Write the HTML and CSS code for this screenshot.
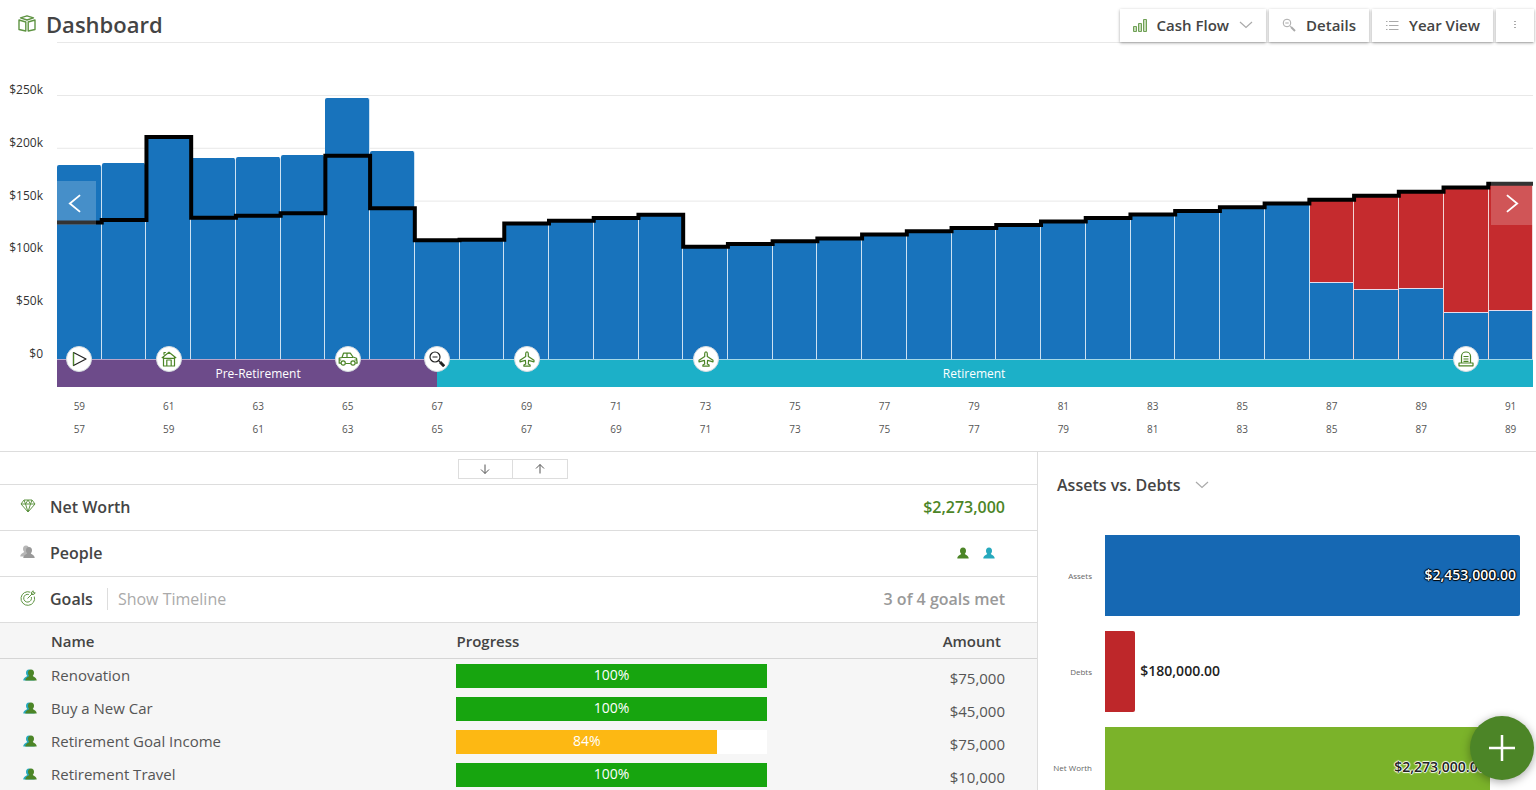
FILE: index.html
```html
<!DOCTYPE html>
<html lang="en">
<head>
<meta charset="utf-8">
<title>Dashboard</title>
<link rel="stylesheet" href="styles.css">
</head>
<body>
<svg class="defs" aria-hidden="true">
  <symbol id="person" viewBox="0 0 12 12"><path d="M6 .5c2 0 3 1.400 3 3.200 0 1.300-.5 2.300-1.200 3 0 1 3.700 1.200 3.900 4.800H.3C.5 7.900 4.200 7.700 4.200 6.700 3.500 6 3 5 3 3.700 3 1.900 4 .5 6 .5z"/></symbol>
  <symbol id="chevron" viewBox="0 0 14 8"><path d="M1 1l6 5.500L13 1" fill="none" stroke="currentColor" stroke-width="1.200"/></symbol>
  <symbol id="plane" viewBox="0 0 16 16"><path d="M8 .8c.9 0 1.300.9 1.300 2v2.700l5.700 3.700v1.600L9.600 9.300 9.300 13l1.800 1v1.200H4.900V14l1.800-1-.3-3.700L1 10.800V9.200l5.700-3.700V2.800c0-1.100.4-2 1.300-2z" fill="none" stroke="currentColor" stroke-width="1.200" stroke-linejoin="round"/></symbol>
</svg>

<div class="app">
  <header class="topbar">
    <div class="brand">
      <svg class="brand-icon" viewBox="0 0 18 17" fill="none" stroke="currentColor" stroke-width="1.400" stroke-linejoin="round"><path d="M9 .8l6.500 2L9 5 2.500 2.800zM1 5l6.800 2v9L1 14.500zM17 5l-6.800 2v9l6.800-1.500z"/></svg>
      <h1>Dashboard</h1>
    </div>
    <nav class="tools">
      <button class="tool" type="button">
        <svg class="icon-bars" viewBox="0 0 14 14" fill="#c5dbb8" stroke="currentColor"><path d="M.5 8.500h3v5h-3zM5.500 5.500h3v8h-3zM10.500 1.500h3v12h-3z"/></svg>
        <span>Cash Flow</span>
        <svg class="chev"><use href="#chevron"/></svg>
      </button>
      <button class="tool" type="button">
        <svg class="icon-gray" viewBox="0 0 14 14" fill="none" stroke="currentColor"><circle cx="5" cy="5" r="3.800"/><path d="M3.300 5h3.400M7.800 7.800l1 1"/><path d="M9 9l4 4" stroke-width="2"/></svg>
        <span>Details</span>
      </button>
      <button class="tool" type="button">
        <svg class="icon-gray" viewBox="0 0 14 14" stroke="currentColor"><path d="M1 3.500h1.500M4 3.500h9.500M1 7.500h1.500M4 7.500h9.500M1 11.500h1.500M4 11.500h9.500"/></svg>
        <span>Year View</span>
      </button>
      <button class="tool more" type="button" aria-label="More">
        <svg viewBox="0 0 4 10" fill="currentColor"><path d="M1 1h2v1H1zM1 4h2v1H1zM1 7h2v1H1z"/></svg>
      </button>
    </nav>
  </header>

  <section class="cashflow" aria-label="Cash Flow">
    <div class="y-axis"><span>$250k</span><span>$200k</span><span>$150k</span><span>$100k</span><span>$50k</span><span>$0</span></div>
    <div class="chart">
      <div class="plot">
        <i class="bar" style="--v:184"></i><i class="bar" style="--v:186"></i><i class="bar" style="--v:210"></i><i class="bar" style="--v:190"></i><i class="bar" style="--v:191.500"></i><i class="bar" style="--v:193.500"></i><i class="bar" style="--v:247.500"></i><i class="bar" style="--v:197"></i><i class="bar" style="--v:112.500"></i><i class="bar" style="--v:113"></i><i class="bar" style="--v:128.500"></i><i class="bar" style="--v:131"></i><i class="bar" style="--v:133.500"></i><i class="bar" style="--v:136.500"></i><i class="bar" style="--v:106.500"></i><i class="bar" style="--v:109"></i><i class="bar" style="--v:111.500"></i><i class="bar" style="--v:114"></i><i class="bar" style="--v:118"></i><i class="bar" style="--v:120.500"></i><i class="bar" style="--v:124"></i><i class="bar" style="--v:127"></i><i class="bar" style="--v:130"></i><i class="bar" style="--v:133.500"></i><i class="bar" style="--v:137"></i><i class="bar" style="--v:140"></i><i class="bar" style="--v:143.500"></i><i class="bar" style="--v:147.500"></i>
        <i class="bar short" style="--v:151;--b:72"></i><i class="bar short" style="--v:154.500;--b:65"></i><i class="bar short" style="--v:158.500;--b:66"></i><i class="bar short" style="--v:162.500;--b:44"></i><i class="bar short" style="--v:166;--b:45"></i>
        <svg class="need" viewBox="0 95 33 264" preserveAspectRatio="none" aria-hidden="true"><path d="M0 222.500H1V220H2V137H3V217.700H4V215.700H5V213.300H6V155.700H7V208.300H8V240.300H9V239.700H10V223.500H11V220.700H12V218H13V214.700H14V246.700H15V244H16V241.300H17V238.500H18V234.500H19V231.300H20V228H21V225H22V221.500H23V218H24V214.500H25V211H26V207.300H27V203.400H28V199.700H29V195.700H30V191.700H31V187.500H32V183.700H33"/></svg>
        <button class="pager prev" type="button" aria-label="Earlier years"><svg viewBox="0 0 14 20"><path d="M13 1L2 10l11 9"/></svg></button>
        <button class="pager next" type="button" aria-label="Later years"><svg viewBox="0 0 14 20"><path d="M1 1l11 9L1 19"/></svg></button>
      </div>
      <div class="stages">
        <div class="stage pre">Pre-Retirement</div>
        <div class="stage post">Retirement</div>
        <span class="marker dark" style="--i:0"><svg viewBox="0 0 16 16"><path d="M2.500 1.500L15 8 2.500 14.500z" stroke="#222"/><path d="M2.500 1.500v13" stroke="#4c8527"/></svg></span>
        <span class="marker" style="--i:2"><svg viewBox="0 0 16 16"><path d="M.8 7L8 1.200 15.200 7M2.500 6v9h11V6M3 3.800V1.500h1.800M5.800 15V9h4.400v6M2 7.300h12"/></svg></span>
        <span class="marker wide" style="--i:6"><svg viewBox="0 0 20 14"><path d="M3 11.200H1.200V6.200L4 5.500 5.500 1.200h6.800L15 5l3.500 1.200.7 5h-1.700M7.500 11.500h5.200M4 5.500h11M9 1.200v4.300M1.200 8h2M16.500 8h2.300"/><circle cx="5.200" cy="11" r="2.100"/><circle cx="15" cy="11" r="2.100"/></svg></span>
        <span class="marker dark" style="--i:8"><svg viewBox="0 0 16 16"><circle cx="6" cy="6" r="5"/><path d="M3.500 6h5M9.500 9.500l1.500 1.500"/><path d="M11 11l4.200 4.200" stroke-width="3"/></svg></span>
        <span class="marker" style="--i:10"><svg><use href="#plane"/></svg></span>
        <span class="marker" style="--i:14"><svg><use href="#plane"/></svg></span>
        <span class="marker" style="--i:31"><svg viewBox="0 0 16 16"><path d="M3.500 12V5A4.300 4.300 0 0 1 8 1a4.300 4.300 0 0 1 4.500 4v7M1 14.800V12h14v2.800zM5.500 5.500h5M5.500 8h5M5.500 10.300h5"/></svg></span>
      </div>
      <div class="ages"><span>59</span><span>61</span><span>63</span><span>65</span><span>67</span><span>69</span><span>71</span><span>73</span><span>75</span><span>77</span><span>79</span><span>81</span><span>83</span><span>85</span><span>87</span><span>89</span><span>91</span></div>
      <div class="ages"><span>57</span><span>59</span><span>61</span><span>63</span><span>65</span><span>67</span><span>69</span><span>71</span><span>73</span><span>75</span><span>77</span><span>79</span><span>81</span><span>83</span><span>85</span><span>87</span><span>89</span></div>
    </div>
  </section>

  <main class="lower">
    <div class="details">
      <div class="resize">
        <button type="button" aria-label="Move down"><svg viewBox="0 0 10 10"><path d="M5 .5v9M1 5.500l4 4 4-4"/></svg></button>
        <button type="button" aria-label="Move up"><svg viewBox="0 0 10 10"><path d="M5 9.500v-9M1 4.500l4-4 4 4"/></svg></button>
      </div>
      <section class="row">
        <svg class="row-icon" viewBox="0 0 16 16"><path d="M4 2h8l3 4-7 8-7-8zM1 6h14M4 2l1.500 4L8 14l2.500-8L12 2M5.500 6L8 2l2.500 4"/></svg>
        <h2>Net Worth</h2>
        <span class="total">$2,273,000</span>
      </section>
      <section class="row">
        <svg class="row-icon people-icon" viewBox="0 0 16 16"><use href="#person" x="0" y="1" width="12" height="12" opacity=".7"/><use href="#person" x="3" y="2" width="12" height="13"/></svg>
        <h2>People</h2>
        <span class="members"><svg class="green"><use href="#person"/></svg><svg class="teal"><use href="#person"/></svg></span>
      </section>
      <section class="row">
        <svg class="row-icon" viewBox="0 0 16 16"><path d="M14.300 6.500a6.800 6.800 0 1 1-4-4.300M11.300 7a3.900 3.900 0 1 1-2.500-2.500M7.500 8.500l5-5M11.500 4.500V2.200L13.200.8v2h2l-1.400 1.700z"/></svg>
        <h2>Goals</h2>
        <a class="timeline" href="#timeline">Show Timeline</a>
        <span class="met">3 of 4 goals met</span>
      </section>
      <table class="goals">
        <colgroup><col class="c-who"><col class="c-name"><col class="c-progress"><col></colgroup>
        <thead><tr><th></th><th scope="col">Name</th><th scope="col">Progress</th><th scope="col" class="amount">Amount</th></tr></thead>
        <tbody>
          <tr><td class="who"><svg viewBox="0 0 14 12"><use class="teal" href="#person" width="12" height="12"/><use class="green" href="#person" x="2" width="12" height="12"/></svg></td><td>Renovation</td><td><div class="track"><div class="fill" style="width:100%">100%</div></div></td><td class="amount">$75,000</td></tr>
          <tr><td class="who"><svg viewBox="0 0 14 12"><use class="teal" href="#person" width="12" height="12"/><use class="green" href="#person" x="2" width="12" height="12"/></svg></td><td>Buy a New Car</td><td><div class="track"><div class="fill" style="width:100%">100%</div></div></td><td class="amount">$45,000</td></tr>
          <tr><td class="who"><svg viewBox="0 0 14 12"><use class="teal" href="#person" width="12" height="12"/><use class="green" href="#person" x="2" width="12" height="12"/></svg></td><td>Retirement Goal Income</td><td><div class="track"><div class="fill partial" style="width:84%">84%</div></div></td><td class="amount">$75,000</td></tr>
          <tr><td class="who"><svg viewBox="0 0 14 12"><use class="teal" href="#person" width="12" height="12"/><use class="green" href="#person" x="2" width="12" height="12"/></svg></td><td>Retirement Travel</td><td><div class="track"><div class="fill" style="width:100%">100%</div></div></td><td class="amount">$10,000</td></tr>
        </tbody>
      </table>
    </div>

    <aside class="balance">
      <button class="picker" type="button"><span>Assets vs. Debts</span><svg class="chev"><use href="#chevron"/></svg></button>
      <div class="hbars">
        <span class="hlabel">Assets</span>
        <div class="hline"><div class="hbar assets" style="width:100%"><span class="value light">$2,453,000.00</span></div></div>
        <span class="hlabel">Debts</span>
        <div class="hline"><div class="hbar debts" style="width:7.300%"></div><span class="value">$180,000.00</span></div>
        <span class="hlabel">Net Worth</span>
        <div class="hline"><div class="hbar worth" style="width:92.700%"><span class="value">$2,273,000.00</span></div></div>
      </div>
    </aside>
  </main>
  <button class="fab" type="button" aria-label="Add"><svg viewBox="0 0 28 28"><path d="M14 1v26M1 14h26"/></svg></button>
</div>
</body>
</html>
```
FILE: styles.css
```css
* { box-sizing: border-box; }
body {
  margin: 0;
  background: #fff;
  color: #444;
  font-family: "Open Sans", "Noto Sans", sans-serif;
  font-size: 15px;
}
button {
  margin: 0;
  padding: 0;
  border: 0;
  background: none;
  color: inherit;
  font: inherit;
}
h1, h2 { margin: 0; font-weight: 600; }
.defs { position: absolute; width: 0; height: 0; }
.app {
  display: flex;
  flex-direction: column;
  height: 100vh;
  overflow: hidden;
}
.green { fill: #4c8527; }
.teal { fill: #26a9bd; }
.chev { width: 14px; height: 8px; color: #aaa; }

/* Top bar */
.topbar {
  display: flex;
  justify-content: space-between;
  height: 42px;
  padding: 0 2px 0 18px;
}
.brand { display: flex; align-items: center; gap: 10px; padding-top: 5px; }
.brand h1 { font-size: 22px; line-height: 30px; }
.brand-icon { width: 18px; height: 17px; color: #5f9443; }
.tools { display: flex; gap: 3px; padding-top: 9px; }
.tool {
  position: relative;
  display: flex;
  align-items: center;
  gap: 10px;
  height: 33px;
  padding: 0 13px 2px;
  background: #fff;
  box-shadow: 0 1px 3px rgba(0, 0, 0, .35);
  font-size: 15px;
  font-weight: 600;
}
.tool svg { flex: none; }
.icon-bars { width: 14px; height: 14px; color: #6fa055; }
.icon-gray { width: 14px; height: 14px; color: #aaa; }
.more { justify-content: center; width: 38px; color: #aaa; }
.more svg { width: 4px; height: 10px; }

/* Cash flow chart */
.cashflow {
  display: flex;
  gap: 14px;
  height: 409px;
  padding-right: 3px;
  flex: none;
}
.y-axis {
  display: flex;
  flex-direction: column;
  justify-content: space-between;
  width: 43px;
  height: 280px;
  margin-top: 40px;
  color: #333;
  text-align: right;
  font-size: 12px;
  line-height: 16px;
}
.chart { flex: 1; padding-top: 52px; border-top: 1px solid #e8e8e8; }
.plot {
  position: relative;
  display: flex;
  align-items: flex-end;
  height: 264px;
  background: linear-gradient(#e8e8e8 1px, transparent 1px) 0 0 / 100% 20%;
}
.bar {
  flex: 1;
  height: calc(var(--v) / 250 * 100%);
  background: #1873bc;
  background-clip: padding-box;
  border-right: 1px solid #cde2f2;
  border-radius: 2px 2px 0 0;
}
.short { display: flex; align-items: flex-end; background: #c52b2e; border-color: #f3d5d6; }
.short::after {
  content: "";
  flex: 1;
  height: calc(var(--b) / var(--v) * 100%);
  border-top: 1px solid #e6dcec;
  background: #1873bc;
}
.need { position: absolute; inset: 0; width: 100%; height: 100%; }
.need path {
  fill: none;
  stroke: #000;
  stroke-width: 4px;
  vector-effect: non-scaling-stroke;
}
.pager {
  position: absolute;
  top: 86px;
  display: grid;
  place-items: center;
  width: 39px;
  height: 44px;
  background: rgba(255, 255, 255, .2);
}
.pager svg { width: 13px; height: 19px; fill: none; stroke: #fff; stroke-width: 2; }
.prev { left: 0; padding-right: 4px; }
.next { right: 0; width: 42px; }
.stages {
  position: relative;
  display: flex;
  height: 28px;
  color: #fff;
  font-size: 12px;
  line-height: 28px;
  text-align: center;
}
.stage { border-top: 1px solid #a5d9e8; }
.pre {
  flex: none;
  width: calc(8.5 / 33 * 100%);
  padding-left: 22px;
  background: #6d4b8a;
  border-color: #b9a5c9;
}
.post { flex: 1; padding-right: 22px; background: #1cb0c8; }
.marker {
  position: absolute;
  top: -13px;
  left: calc((var(--i) + .5) / 33 * 100%);
  display: grid;
  place-items: center;
  width: 26px;
  height: 26px;
  margin-left: -13px;
  border: 1px solid #d5dce0;
  border-radius: 50%;
  background: #fff;
  color: #4c8527;
}
.marker svg { width: 16px; height: 16px; fill: none; stroke: currentColor; stroke-width: 1.200; stroke-linejoin: round; }
.marker.wide svg { width: 20px; height: 14px; }
.dark { color: #222; }
.ages {
  display: flex;
  justify-content: space-between;
  margin-top: 11px;
  font-size: 10px;
  line-height: 16px;
  color: #555;
  text-align: center;
}
.ages span { width: calc(100% / 33); }
.ages + .ages { margin-top: 7px; }

/* Lower panels */
.lower { display: flex; flex: 1; min-height: 0; border-top: 1px solid #ddd; }
.details { flex: none; width: 67.58%; border-right: 1px solid #ddd; }
.resize {
  display: flex;
  justify-content: center;
  height: 32px;
  padding: 7px 12px 0 0;
}
.resize button {
  display: grid;
  place-items: center;
  width: 55px;
  height: 20px;
  border: 1px solid #ddd;
}
.resize button + button { border-left: 0; }
.resize svg { width: 10px; height: 10px; fill: none; stroke: #555; }
.row {
  display: flex;
  align-items: center;
  height: 46px;
  padding: 0 32px 2px 20px;
  border-top: 1px solid #ddd;
  font-size: 16px;
  font-weight: 600;
}
.row-icon {
  width: 16px;
  height: 16px;
  margin: 0 14px 2px 0;
  fill: none;
  stroke: #5f9443;
}
.people-icon { fill: #999; stroke: none; }
.row h2 { font-size: 16px; }
.total { margin-left: auto; color: #4c8527; }
.members { display: flex; gap: 14px; margin-left: auto; padding-right: 10px; }
.members svg { width: 12px; height: 12px; }
.timeline {
  margin-left: 14px;
  padding-left: 10px;
  border-left: 1px solid #ddd;
  color: #aaa;
  font-weight: 400;
  text-decoration: none;
}
.met { margin-left: auto; color: #999; }
.goals {
  width: 100%;
  table-layout: fixed;
  border-spacing: 0;
  border-top: 1px solid #ddd;
  background: #f6f6f6;
  font-size: 15px;
}
.c-who { width: 51px; }
.c-name { width: 39.100%; }
.c-progress { width: 29.900%; }
.goals th {
  height: 36px;
  padding: 0;
  border-bottom: 1px solid #d5d5d5;
  font-weight: 600;
  text-align: left;
}
.goals td { height: 33px; padding: 0 0 2px; color: #555; line-height: 20px; }
.goals td:nth-child(3) { padding: 0; }
.goals .amount { padding-right: 32px; text-align: right; }
.goals th.amount { padding-right: 36px; }
.goals td.amount { padding-top: 4px; padding-bottom: 0; }
.who svg { display: block; width: 14px; height: 12px; margin-left: 23px; }
.track { height: 24px; background: #fff; }
.fill {
  height: 24px;
  background: #17a50f;
  color: #fff;
  font-size: 14px;
  line-height: 22px;
  text-align: center;
}
.partial { background: #fdb813; }

/* Assets and debts */
.balance { flex: 1; min-width: 0; padding: 21px 16px 0 19px; }
.picker {
  display: flex;
  align-items: center;
  gap: 14px;
  font-size: 16px;
  line-height: 24px;
  font-weight: 600;
}
.hbars {
  display: grid;
  grid-template-columns: 35px 1fr;
  gap: 15px 13px;
  align-items: center;
  margin-top: 38px;
}
.hlabel {
  display: flex;
  justify-content: flex-end;
  color: #666;
  font-size: 8px;
  white-space: nowrap;
}
.hline { display: flex; align-items: center; gap: 5px; }
.hbar {
  display: flex;
  align-items: center;
  justify-content: flex-end;
  height: 81px;
  padding-right: 4px;
  border-radius: 0 2px 2px 0;
}
.assets { background: #1668b3; }
.debts { background: #be272a; padding: 0; }
.worth { background: #7bb32a; }
.value {
  padding-bottom: 3px;
  color: #222;
  font-size: 14px;
  font-weight: 600;
  text-shadow: 1px 0 1px #fff, -1px 0 1px #fff, 0 1px 1px #fff, 0 -1px 1px #fff;
}
.light {
  color: #fff;
  text-shadow: 1px 0 1px #000, -1px 0 1px #000, 0 1px 1px #000, 0 -1px 1px #000;
}
.fab {
  position: fixed;
  right: 2px;
  bottom: 10px;
  display: grid;
  place-items: center;
  width: 64px;
  height: 64px;
  border-radius: 50%;
  background: #4c8527;
  box-shadow: 0 2px 10px rgba(0, 0, 0, .35);
}
.fab svg { width: 28px; height: 28px; stroke: #fff; stroke-width: 2.500; }
```
